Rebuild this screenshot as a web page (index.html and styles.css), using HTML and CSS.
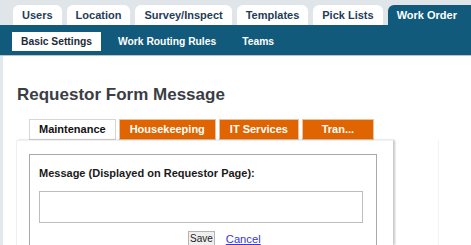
FILE: index.html
```html
<!DOCTYPE html>
<html>

<head>
	<meta name="viewport" content="width=device-width, initial-scale=1" />
	<link rel="stylesheet" href="styles.css">
</head>

<body>
	<div class="topTabs">
		<a class="topTab">Users</a>
		<a class="topTab">Location</a>
		<a class="topTab">Survey/Inspect</a>
		<a class="topTab">Templates</a>
		<a class="topTab">Pick Lists</a>
		<a class="topTab active">Work Order</a>
	</div>
	<div class="subNav">
		<a class="subItem active">Basic Settings</a>
		<a class="subItem">Work Routing Rules</a>
		<a class="subItem">Teams</a>
	</div>

	<div class="content">
		<h1 class="pageTitle">Requestor Form Message</h1>

		<div class="formTabs">
			<a class="formTab active">Maintenance</a>
			<a class="formTab">Housekeeping</a>
			<a class="formTab">IT Services</a>
			<a class="formTab short">Tran...</a>
		</div>

		<div class="row">
			<div class="card">
				<div class="msgBox">
					<label class="msgLabel">Message (Displayed on Requestor Page):</label>
					<textarea class="msgText"></textarea>
					<div class="actions">
						<button class="saveBtn">Save</button>
						<a href="#" class="cancelLink">Cancel</a>
					</div>
				</div>
			</div>
			<div class="sideCol"></div>
		</div>
	</div>
</body>

</html>
```

FILE: styles.css
```css
body {
	margin: 0;
	font-family: "Liberation Sans", Arial, sans-serif;
	background-color: #ffffff;
	overflow: hidden;
}

.topTabs {
	display: flex;
	gap: 5px;
	height: 25px;
	box-sizing: border-box;
	padding: 5px 0 0 13px;
	background-color: #dfe5e9;
	white-space: nowrap;
}

.topTab {
	flex-shrink: 0;
	height: 20px;
	line-height: 20px;
	padding: 0 9px;
	background-color: #ffffff;
	border-radius: 6px 6px 0 0;
	color: #1f3d57;
	font-size: 11px;
	font-weight: bold;
}

.topTab.active {
	background-color: #125a7b;
	color: #ffffff;
	padding-right: 20px;
}

.subNav {
	display: flex;
	gap: 8px;
	height: 31px;
	box-sizing: border-box;
	padding: 7px 0 0 12px;
	background-color: #125a7b;
	border-bottom: 1px solid #b9c5cc;
}

.subItem {
	height: 19px;
	line-height: 19px;
	padding: 0 9px;
	color: #ffffff;
	font-size: 10.3px;
	font-weight: bold;
}

.subItem.active {
	background-color: #ffffff;
	color: #1c2b38;
}

.content {
	border-left: 3px solid #e3e8ec;
	padding: 29px 0 0 13px;
	height: 160px;
}

.pageTitle {
	margin: 0;
	padding-left: 1px;
	font-size: 17px;
	line-height: 20px;
	color: #3a3e44;
}

.formTabs {
	display: flex;
	gap: 3px;
	margin: 14px 0 0 13px;
}

.formTab {
	height: 21px;
	box-sizing: border-box;
	line-height: 19px;
	padding: 0 10px;
	border: 1px solid #e9c0a0;
	background-color: #e06400;
	color: #ffffff;
	font-size: 11px;
	font-weight: bold;
	text-align: center;
}

.formTab.active {
	background-color: #ffffff;
	border-color: #d6d6d6;
	color: #111111;
	padding: 0 9px;
}

.formTab.short {
	width: 72px;
}

.row {
	display: flex;
}

.card {
	width: 377px;
	height: 105px;
	box-sizing: border-box;
	padding: 13px 16px 0 12px;
	border-left: 1px solid #f0f0f0;
	border-top: 1px solid #f0f0f0;
	box-shadow: 2px 0 2px rgba(0, 0, 0, 0.22);
	overflow: hidden;
}

.msgBox {
	border: 1px solid #a9a9a9;
	padding: 12px 13px 0 9px;
	height: 120px;
}

.msgLabel {
	display: block;
	font-size: 11px;
	line-height: 13px;
	font-weight: bold;
	color: #1a1a1a;
}

.msgText {
	display: block;
	width: 324px;
	height: 32px;
	box-sizing: border-box;
	margin-top: 11px;
	border: 1px solid #bdbdbd;
	resize: none;
}

.actions {
	display: flex;
	align-items: center;
	gap: 11px;
	margin: 8px 0 0 149px;
}

.saveBtn {
	padding: 1px 1px;
	background-color: #efefef;
	border: 1px solid #b4b4b4;
	border-radius: 0;
	font-family: "Liberation Sans", Arial, sans-serif;
	font-size: 10px;
	color: #222222;
}

.cancelLink {
	font-size: 11.2px;
	color: #3636d6;
}

.sideCol {
	margin-left: 45px;
	border-left: 1px solid #f3f3f3;
	height: 105px;
}
```
